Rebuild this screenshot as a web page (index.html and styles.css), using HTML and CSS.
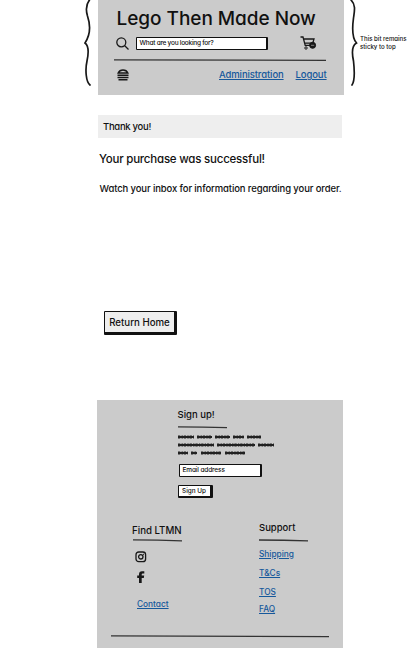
FILE: index.html
```html
<!DOCTYPE html>
<html lang="en">
<head>
<meta charset="utf-8">
<title>Lego Then Made Now</title>
<link rel="stylesheet" href="styles.css">
</head>
<body>
<div class="top">
  <svg class="brace brace-left" width="12" height="90" viewBox="0 0 12 90"><path d="M6.500 0C2.500 5 3 11 4.500 16C8.500 28 6 37 2 43C6 46 5.500 54 4 61C2 70 3 82 7 85"/></svg>
  <header class="header">
    <h1 class="title">Lego Then Made Now</h1>
    <div class="search-row">
      <svg class="search-icon" width="14" height="14" viewBox="0 0 14 14"><circle cx="5.300" cy="5.300" r="4.500"/><path d="M8.500 8.500l4 4"/></svg>
      <div class="search">What are you looking for?</div>
      <svg class="cart" width="17" height="14" viewBox="0 0 17 14"><path d="M.5 1H3L5.200 9.300H11M3.500 3H14L12.800 7.200H5"/><circle cx="6" cy="12" r="1.2"/><circle class="fill" cx="12.600" cy="9.300" r="3"/><path class="minus" d="M11 9.300H14.200"/></svg>
    </div>
    <svg class="rule" width="213" height="3" viewBox="0 0 213 3"><path d="M0 .8Q110 .8 212 1.300"/></svg>
    <nav class="nav">
      <svg class="burger" width="12" height="12" viewBox="0 0 12 12"><path d="M1.200 4Q2.500 1 6 1t4.800 3z"/><path d="M.5 6.200H11.500M.5 8.400H11.500M1.500 10.800H10.500"/></svg>
      <a class="admin" href="#">Administration</a>
      <a class="logout" href="#">Logout</a>
    </nav>
  </header>
  <svg class="brace brace-right" width="12" height="90" viewBox="0 0 12 90"><path d="M2 0C7 5 5.500 11 4.500 18C3 29 3 38 7.500 43C2 46 3 54 4.500 61C5.500 70 6.500 80 3 85"/></svg>
  <p class="note">This bit remains<br>sticky to top</p>
</div>
<main class="main">
  <div class="banner">Thank you!</div>
  <h2 class="success">Your purchase was successful!</h2>
  <p class="info">Watch your inbox for information regarding your order.</p>
  <button class="home">Return Home</button>
</main>
<footer class="footer">
  <section class="signup">
    <h3 class="signup-title">Sign up!</h3>
    <svg class="rule" width="50" height="3" viewBox="0 0 50 3"><path d="M0 .8Q25 1 49 1.700"/></svg>
    <svg class="scribble" width="97" height="24" viewBox="0 0 97 24">
      <g class="stroke"><path d="M0 4H16M19 4H34M37 4H52M55 4H66M69 4H83"/>
      <path d="M0 12H36M39 12H77M80 12H96"/>
      <path d="M0 20H10M13 20H19M23 20H43M47 20H67"/></g>
      <g class="texture"><path d="M0 4H16M19 4H34M37 4H52M55 4H66M69 4H83"/>
      <path d="M0 12H36M39 12H77M80 12H96"/>
      <path d="M0 20H10M13 20H19M23 20H43M47 20H67"/></g>
    </svg>
    <div class="email">Email address</div>
    <button class="submit">Sign Up</button>
  </section>
  <div class="columns">
    <section class="find">
      <h3 class="find-title">Find LTMN</h3>
      <svg class="rule" width="50" height="3" viewBox="0 0 50 3"><path d="M0 .8Q25 .8 49 1.800"/></svg>
      <svg class="insta" width="12" height="12" viewBox="0 0 12 12"><rect x="1" y="1" width="9.600" height="9.600" rx="2.700"/><circle cx="5.800" cy="5.800" r="2.200"/><path d="M8.200 3.400h.8"/></svg>
      <svg class="facebook" width="8" height="12" viewBox="0 0 8 12"><path d="M2 12V7H.2V4.500H2V3.200Q2 .3 5 .3H7.300V2.500H5.800Q4.700 2.500 4.700 3.500V4.500H7.200L6.800 7H4.700V12z"/></svg>
      <a class="link contact" href="#">Contact</a>
    </section>
    <section class="support">
      <h3 class="support-title">Support</h3>
      <svg class="rule" width="51" height="3" viewBox="0 0 51 3"><path d="M0 1Q25 1 49 1.800"/></svg>
      <a class="link shipping" href="#">Shipping</a>
      <a class="link tcs" href="#">T&amp;Cs</a>
      <a class="link tos" href="#">TOS</a>
      <a class="link faq" href="#">FAQ</a>
    </section>
  </div>
  <svg class="rule bottom-rule" width="219" height="3" viewBox="0 0 219 3"><path d="M0 .8Q110 .8 218 1.700"/></svg>
</footer>
</body>
</html>
```
FILE: styles.css
```css
* { box-sizing: border-box; margin: 0; padding: 0; }
html { overflow: hidden; }
body { width: 412px; height: 648px; overflow: hidden; background: #fff; color: #111; font-family: Inter, "Liberation Sans", sans-serif; font-feature-settings: "cv11"; font-weight: 500; }
svg { display: block; flex: none; }
h1, h2, h3 { font-weight: 500; }
h1, h2, h3, p, a, div, button { white-space: nowrap; }
a { color: #16589b; text-underline-offset: 1px; }
path, circle, rect { fill: none; stroke: #181818; }
.rule path { stroke: #333; stroke-width: 1.3; }
.fill { fill: #181818; }
.top { display: flex; height: 95px; }
.brace path { stroke-width: 1.700; stroke-linecap: round; }
.brace-left { margin-left: 83px; }
.header { width: 246px; height: 95px; margin-left: 2.500px; background: #cbcbcb; flex: none; }
.title { height: 35px; padding-left: 19px; font-size: 19px; line-height: 38px; letter-spacing: -.04px; }
.search-row { display: flex; height: 24px; padding: 1px 0 0 18.500px; }
.search-icon { margin-top: 1px; }
.search-icon * { stroke-width: 1.300; }
.search { width: 132px; height: 12.500px; margin-left: 6px; margin-top: 1px; padding-left: 2.500px; border: 1.500px solid #111; border-right-width: 2px; border-radius: 1px; background: #fff; font-size: 6.500px; line-height: 10px; letter-spacing: -.25px; }
.cart { margin-left: 32px; }
.cart path { stroke-width: 1.300; }
.cart .minus { stroke: #999; stroke-width: .8; }
.header > .rule { margin-left: 16px; }
.nav { display: flex; height: 24px; padding-top: 7px; padding-left: 19px; font-size: 9.500px; line-height: 12px; letter-spacing: -.12px; }
.burger path { stroke-width: 1.500; }
.admin { margin-left: 90.500px; }
.logout { margin-left: 12px; }
.brace-right { margin-left: 5px; }
.note { margin: 35px 0 0 -.5px; font-size: 6.100px; line-height: 8px; }
.main { width: 246px; height: 306px; margin-left: 97px; padding-top: 20px; }
.banner { width: 244px; height: 23px; margin-left: 1px; padding-left: 5px; background: #eee; font-size: 9.500px; line-height: 23px; letter-spacing: -.3px; }
.success { margin: 13px 0 0 2px; font-size: 11.500px; line-height: 16px; letter-spacing: -.22px; }
.info { margin: 15px 0 0 2.500px; font-size: 9.500px; line-height: 14px; letter-spacing: -.12px; }
.home { display: block; width: 73px; height: 24px; margin: 115px 0 0 7px; border: solid #111; border-width: 1px 3px 3px 1.500px; border-radius: 1px; background: #eee; color: #111; font: 500 9.700px Inter, sans-serif; font-feature-settings: "cv11"; }
.footer { width: 246px; height: 248px; margin: -1px 0 0 97px; background: #cbcbcb; overflow: hidden; }
.signup { height: 122px; padding: 7px 0 0 80.500px; }
.signup-title { font-size: 9.500px; line-height: 16px; }
.signup > .rule { margin-top: 3px; }
.scribble { margin-top: 4px; }
.stroke path { stroke-width: 2; stroke: #222; }
.texture path { stroke-width: 3.200; stroke: #222; stroke-dasharray: 2.300 1.200 1.400 .9; }
.email { width: 83px; height: 13px; margin: 7px 0 0 1px; padding-left: 3px; border: 1.500px solid #111; border-right-width: 2px; border-radius: 1px; background: #fff; font-size: 6.500px; line-height: 10px; letter-spacing: -.13px; }
.submit { display: block; width: 35px; height: 13px; margin-top: 8px; border: solid #111; border-width: 1px 3px 2px 1px; border-radius: 1px; background: #fff; color: #111; font: 500 6.400px Inter, sans-serif; }
.columns { display: flex; height: 113px; }
.find { width: 126px; padding: 1px 0 0 35px; }
.find-title { font-size: 9.700px; line-height: 16px; }
.find > .rule { margin-left: 1px; }
.insta { margin: 9px 0 0 3px; }
.insta * { stroke-width: 1.300; }
.facebook { margin: 8px 0 0 5px; }
.facebook path { fill: #181818; stroke: none; }
.link { display: block; width: max-content; font-size: 8.300px; line-height: 12px; }
.contact { margin: 15px 0 0 5px; }
.support { padding: 0 0 0 36px; margin-top: -2px; }
.support-title { font-size: 9.500px; line-height: 16px; }
.support > .rule { margin-top: 3px; }
.shipping { margin-top: 6px; }
.tcs { margin-top: 7px; }
.tos { margin-top: 7px; }
.faq { margin-top: 5px; }
.bottom-rule { margin-left: 14px; }
```
